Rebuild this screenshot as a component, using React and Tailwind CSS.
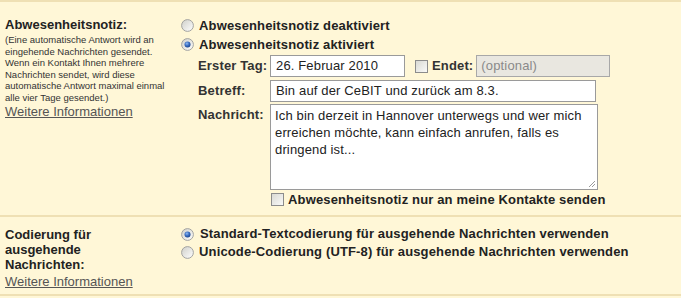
import React from "react";

function Radio({ checked, id }) {
  return (
    <svg width="13" height="13" viewBox="0 0 13 13" className="shrink-0">
      <defs>
        <linearGradient id={`rg${id}`} x1="0" y1="0" x2="1" y2="1">
          <stop offset="0" stopColor="#cfcfc9" />
          <stop offset="1" stopColor="#ffffff" />
        </linearGradient>
        <radialGradient id={`rd${id}`} cx="0.4" cy="0.35" r="0.7">
          <stop offset="0" stopColor="#8fb8f0" />
          <stop offset="0.5" stopColor="#3a6fc4" />
          <stop offset="1" stopColor="#163f86" />
        </radialGradient>
      </defs>
      <circle cx="6.5" cy="6.5" r="5.9" fill={`url(#rg${id})`} stroke="#a3a3a0" strokeWidth="1" />
      {checked && <circle cx="6.5" cy="6.5" r="3" fill={`url(#rd${id})`} />}
    </svg>
  );
}

function Checkbox({ id }) {
  return (
    <svg width="13" height="13" viewBox="0 0 13 13" className="shrink-0">
      <defs>
        <linearGradient id={`cg${id}`} x1="0" y1="0" x2="1" y2="1">
          <stop offset="0" stopColor="#d8d8d2" />
          <stop offset="1" stopColor="#fbfbfa" />
        </linearGradient>
      </defs>
      <rect x="0.5" y="0.5" width="12" height="12" fill={`url(#cg${id})`} stroke="#8c8c8c" />
    </svg>
  );
}

export default function App() {
  return (
    <div className="w-[681px] h-[298px] overflow-hidden bg-[#fff7d7] font-['Liberation_Sans',Arial,sans-serif] text-[13px] text-[#222]">
      {/* Section 1 */}
      <div className="flex h-[217px] border-t-2 border-b-2 border-[#efe0b4]">
        <div className="w-[181px] shrink-0 pl-[5px] pt-[15px]">
          <div className="font-bold leading-[16px] text-[#222]">Abwesenheitsnotiz:</div>
          <div className="mt-[1px] text-[9.5px] leading-[11.5px] text-[#333]">
            (Eine automatische Antwort wird an
            <br />
            eingehende Nachrichten gesendet.
            <br />
            Wenn ein Kontakt Ihnen mehrere
            <br />
            Nachrichten sendet, wird diese
            <br />
            automatische Antwort maximal einmal
            <br />
            alle vier Tage gesendet.)
          </div>
          <div className="mt-[1px] leading-[16px] text-[#555] underline">Weitere Informationen</div>
        </div>
        <div className="flex-1 pt-[14px] tracking-[0.15px]">
          <div className="flex h-[19px] items-center">
            <Radio id="a" />
            <span className="ml-[5px] font-bold leading-[16px]">Abwesenheitsnotiz deaktiviert</span>
          </div>
          <div className="flex h-[19px] items-center">
            <Radio id="b" checked />
            <span className="ml-[5px] font-bold leading-[16px]">Abwesenheitsnotiz aktiviert</span>
          </div>
          <div className="pl-[17px]">
            <div className="mt-[1px] flex h-[22px] items-center">
              <span className="w-[72px] font-bold text-[#333]">Erster Tag:</span>
              <div className="flex h-[22px] w-[135px] items-center border border-[#9a9a9a] bg-white pl-[5px]">
                26. Februar 2010
              </div>
              <span className="ml-[10px]">
                <Checkbox id="c" />
              </span>
              <span className="ml-[4px] font-bold text-[#333]">Endet:</span>
              <div className="ml-[3px] flex h-[22px] w-[134px] items-center border border-[#a8a8a8] bg-[#e9e7e0] pl-[4px] text-[#8a8a8a]">
                (optional)
              </div>
            </div>
            <div className="mt-[3px] flex h-[22px] items-center">
              <span className="w-[72px] font-bold text-[#333]">Betreff:</span>
              <div className="flex h-[22px] w-[326px] items-center border border-[#9a9a9a] bg-white pl-[5px]">
                Bin auf der CeBIT und zurück am 8.3.
              </div>
            </div>
            <div className="mt-[2px] flex">
              <span className="w-[72px] pt-[3px] font-bold leading-[16px] text-[#333]">Nachricht:</span>
              <div className="relative h-[86px] w-[328px] border border-[#9a9a9a] bg-white pl-[4px] pt-[2px] leading-[17px]">
                Ich bin derzeit in Hannover unterwegs und wer mich
                <br />
                erreichen möchte, kann einfach anrufen, falls es
                <br />
                dringend ist...
                <svg width="8" height="8" viewBox="0 0 8 8" className="absolute bottom-[1px] right-[1px]">
                  <line x1="7" y1="1" x2="1" y2="7" stroke="#9a9a9a" strokeWidth="1" />
                  <line x1="7" y1="4" x2="4" y2="7" stroke="#9a9a9a" strokeWidth="1" />
                </svg>
              </div>
            </div>
            <div className="mt-[1px] flex h-[17px] items-center pl-[73px]">
              <Checkbox id="d" />
              <span className="ml-[4px] font-bold leading-[16px]">Abwesenheitsnotiz nur an meine Kontakte senden</span>
            </div>
          </div>
        </div>
      </div>
      {/* Section 2 */}
      <div className="flex h-[79px] border-b-2 border-[#efe0b4]">
        <div className="w-[181px] shrink-0 pl-[5px] pt-[10px]">
          <div className="font-bold leading-[15px] text-[#222]">
            Codierung für
            <br />
            ausgehende
            <br />
            Nachrichten:
          </div>
          <div className="mt-[2px] leading-[16px] text-[#555] underline">Weitere Informationen</div>
        </div>
        <div className="flex-1 pt-[8px] tracking-[0.15px]">
          <div className="flex h-[18px] items-center">
            <Radio id="e" checked />
            <span className="ml-[6px] font-bold leading-[16px]">Standard-Textcodierung für ausgehende Nachrichten verwenden</span>
          </div>
          <div className="flex h-[18px] items-center">
            <Radio id="f" />
            <span className="ml-[5px] font-bold leading-[16px]">Unicode-Codierung (UTF-8) für ausgehende Nachrichten verwenden</span>
          </div>
        </div>
      </div>
    </div>
  );
}
